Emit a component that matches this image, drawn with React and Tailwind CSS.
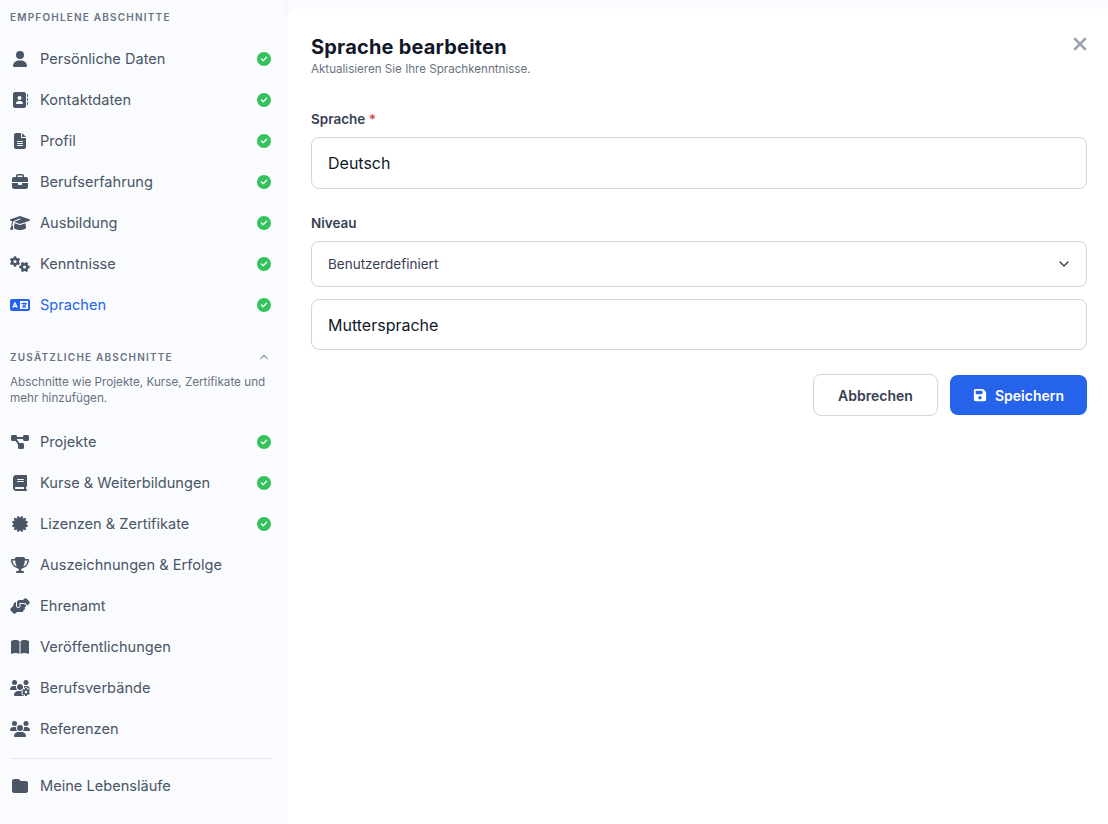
import React from 'react';
import {
  FaUser, FaAddressBook, FaFileLines, FaBriefcase, FaGraduationCap, FaGears, FaLanguage,
  FaDiagramProject, FaBook, FaCertificate, FaTrophy, FaHandshakeAngle, FaBookOpen,
  FaUsersGear, FaUsers, FaFolder, FaCircleCheck, FaFloppyDisk, FaXmark,
} from 'react-icons/fa6';
import { ChevronDown, ChevronUp } from 'lucide-react';

const recommended = [
  { label: 'Persönliche Daten', icon: FaUser, done: true },
  { label: 'Kontaktdaten', icon: FaAddressBook, done: true },
  { label: 'Profil', icon: FaFileLines, done: true },
  { label: 'Berufserfahrung', icon: FaBriefcase, done: true },
  { label: 'Ausbildung', icon: FaGraduationCap, done: true },
  { label: 'Kenntnisse', icon: FaGears, done: true },
  { label: 'Sprachen', icon: FaLanguage, done: true, active: true },
];

const additional = [
  { label: 'Projekte', icon: FaDiagramProject, done: true },
  { label: 'Kurse & Weiterbildungen', icon: FaBook, done: true },
  { label: 'Lizenzen & Zertifikate', icon: FaCertificate, done: true },
  { label: 'Auszeichnungen & Erfolge', icon: FaTrophy },
  { label: 'Ehrenamt', icon: FaHandshakeAngle },
  { label: 'Veröffentlichungen', icon: FaBookOpen },
  { label: 'Berufsverbände', icon: FaUsersGear },
  { label: 'Referenzen', icon: FaUsers },
];

function NavRow({ item }) {
  const Icon = item.icon;
  return (
    <div className={`h-[41px] flex items-center text-[14.6px] ${item.active ? 'text-[#2563eb]' : 'text-gray-600'}`}>
      <span className="w-[30px] shrink-0 flex items-center justify-start -mt-px">
        <Icon className="w-[20px] h-[16px]" />
      </span>
      <span className="flex-1 truncate">{item.label}</span>
      {item.done && <FaCircleCheck className="w-[14px] h-[14px] -mt-px text-[#34c25c]" />}
    </div>
  );
}

export default function App() {
  return (
    <div className="w-full h-[824px] overflow-hidden bg-[#f9fbfe] flex" style={{ fontFamily: "Inter, sans-serif" }}>
      {/* Sidebar */}
      <aside className="w-[287px] shrink-0 pl-[10px] pr-[15px] pt-[11px] border-r border-slate-100">
        <p className="text-[10px] leading-[12px] font-semibold text-gray-500 uppercase tracking-[1.2px] mb-[16px]">Empfohlene Abschnitte</p>
        {recommended.map((item) => <NavRow key={item.label} item={item} />)}

        <div className="mt-[25px] flex items-center justify-between h-[12px]">
          <p className="text-[10px] leading-[12px] font-semibold text-gray-500 uppercase tracking-[1.2px]">Zusätzliche Abschnitte</p>
          <ChevronUp className="w-[14px] h-[14px] text-gray-400" />
        </div>
        <p className="mt-[12px] mb-[16px] text-[11.7px] leading-[15.5px] text-gray-500">
          Abschnitte wie Projekte, Kurse, Zertifikate und mehr hinzufügen.
        </p>
        {additional.map((item) => <NavRow key={item.label} item={item} />)}

        <div className="mt-[8px] border-t border-gray-200" />
        <div className="mt-[7px]">
          <NavRow item={{ label: 'Meine Lebensläufe', icon: FaFolder }} />
        </div>
      </aside>

      {/* Panel */}
      <main className="flex-1 mt-[9px] bg-white rounded-tl-xl pl-[24px] pr-[21px] pt-[26px] relative">
        <button className="absolute top-[25px] right-[18px] text-gray-400">
          <FaXmark className="w-[20px] h-[20px]" />
        </button>
        <h1 className="text-[20px] leading-[24px] font-bold text-gray-900 tracking-[0.2px]">Sprache bearbeiten</h1>
        <p className="text-[11.6px] leading-[14px] mt-[3px] text-gray-500">Aktualisieren Sie Ihre Sprachkenntnisse.</p>

        <label className="block mt-[35px] text-[13.5px] leading-[16px] font-semibold text-gray-700">
          Sprache <span className="text-[#e04545]">*</span>
        </label>
        <div className="mt-[10px] h-[52px] border border-gray-300 rounded-lg px-4 flex items-center text-[16px] text-gray-900">Deutsch</div>

        <label className="block mt-[26px] text-[13.5px] leading-[16px] font-semibold text-gray-700">Niveau</label>
        <div className="mt-[10px] h-[46px] border border-gray-300 rounded-lg pl-4 pr-[14px] flex items-center justify-between text-[13.5px] text-gray-700">
          Benutzerdefiniert
          <ChevronDown className="w-[16px] h-[16px] text-gray-700" />
        </div>
        <div className="mt-[12px] h-[51px] border border-gray-300 rounded-lg px-4 flex items-center text-[16px] text-gray-900">Muttersprache</div>

        <div className="mt-[24px] flex justify-end gap-3">
          <button className="w-[125px] h-[42px] border border-gray-300 rounded-lg text-[14px] font-semibold text-gray-700 bg-white">Abbrechen</button>
          <button className="w-[137px] h-[40px] mt-px rounded-lg text-[14px] font-semibold text-white bg-[#2563eb] flex items-center justify-center gap-2">
            <FaFloppyDisk className="w-[14px] h-[14px]" />
            Speichern
          </button>
        </div>
      </main>
    </div>
  );
}
